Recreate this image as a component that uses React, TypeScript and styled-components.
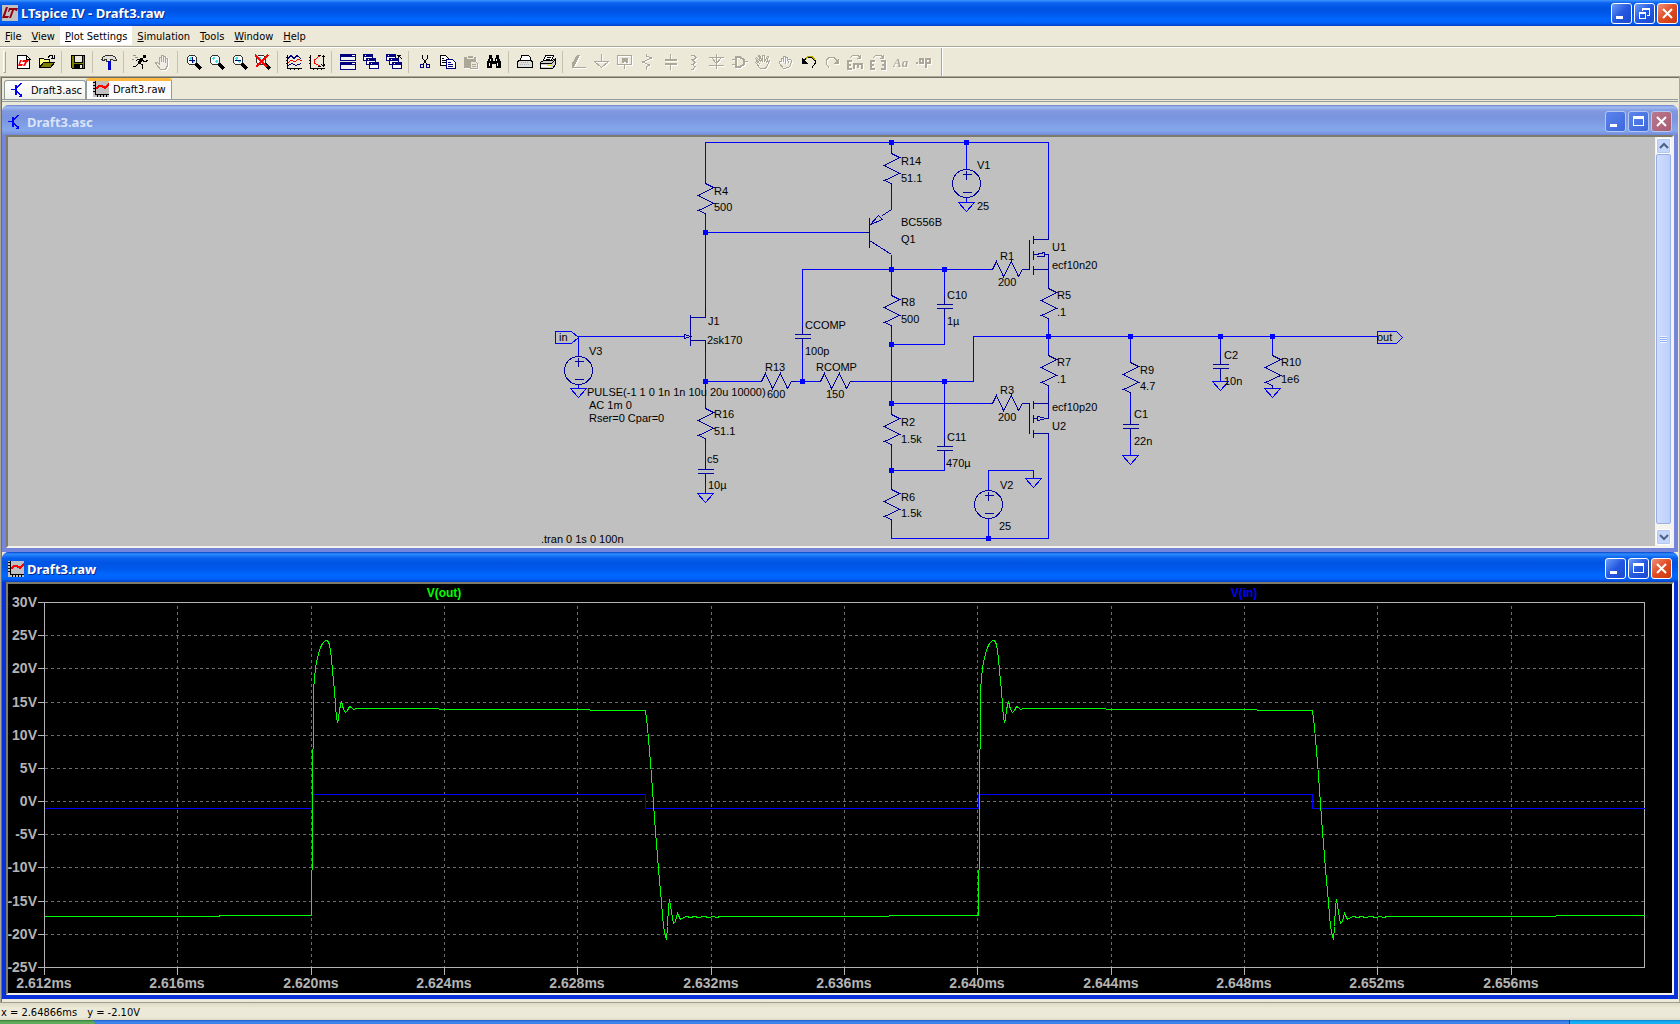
import React from 'react'
import styled, { createGlobalStyle, css } from 'styled-components'

const GlobalStyle = createGlobalStyle`
	* {
		box-sizing: border-box;
	}

	body {
		margin: 0;
		background: #ece9d8;
		font-family: 'DejaVu Sans Condensed', 'Liberation Sans', sans-serif;
		font-size: 11px;
		color: #000;
	}

	button {
		font: inherit;
		color: inherit;
		padding: 0;
		border: 0;
		background: none;
	}
`

const Page = styled.div`
	display: flex;
	flex-direction: column;
	min-height: 100vh;
`

const TitleBar = styled.header`
	display: flex;
	align-items: center;
	gap: 3px;
	height: 26px;
	padding: 0 2px;
	background: linear-gradient(
		#3d95ff 0,
		#0b62ef 3px,
		#0054e3 8px,
		#0055e5 12px,
		#0066ff 19px,
		#0060f8 23px,
		#0040cb 26px
	);
`

const TitleText = styled.h1<{ $faded?: boolean }>`
	flex: 1;
	margin: 0;
	font-family: 'Noto Sans', sans-serif;
	font-size: 13px;
	line-height: 20px;
	font-weight: 700;
	color: ${p => (p.$faded ? '#d8e4f8' : '#fff')};
	text-shadow: ${p => (p.$faded ? 'none' : '1px 1px 0 #0a2a8a')};
`

const Controls = styled.div`
	display: flex;
	gap: 2px;
`

const ControlButton = styled.button<{ $close?: boolean; $faded?: boolean }>`
	width: 21px;
	height: 21px;
	border: 1px solid ${p => (p.$faded ? '#b4c8f0' : '#fff')};
	border-radius: 3px;
	background: ${p =>
		p.$close
			? p.$faded
				? 'linear-gradient(135deg, #b8788c, #a85c74)'
				: 'linear-gradient(135deg, #f09078, #e04c24 50%, #c83810)'
			: p.$faded
				? 'linear-gradient(135deg, #5c84ec, #3c68dc)'
				: 'linear-gradient(135deg, #6c9cf8, #2458e0 50%, #1c48d0)'};

	svg {
		display: block;
	}
`

const MenuBar = styled.nav`
	display: flex;
	height: 22px;
	border-bottom: 1px solid #fff;
	box-shadow: inset 0 -1px 0 #aca899;
`

const MenuItem = styled.button<{ $active?: boolean }>`
	height: 19px;
	padding: 1px 5px 0;
	background: ${p => (p.$active ? '#fff' : 'transparent')};
`

const ToolBar = styled.div`
	display: flex;
	align-items: center;
	height: 28px;
	padding-left: 3px;
`

const Grip = styled.span`
	width: 3px;
	height: 22px;
	margin-right: 6px;
	border: 1px solid #fff;
	border-right-color: #aca899;
	border-bottom-color: #aca899;
`

const ToolGroup = styled.div`
	display: flex;

	& + & {
		margin-left: 3px;
		padding-left: 4px;
		border-left: 1px solid #c5c2b2;
	}
`

const ToolButton = styled.button`
	display: flex;
	align-items: center;
	justify-content: center;
	width: 23px;
	height: 22px;

	&:disabled {
		color: #aca899;
		filter: drop-shadow(1px 1px 0 #fff);
	}
`

const ToolEnd = styled.span`
	align-self: stretch;
	width: 2px;
	margin-left: 6px;
	border-left: 1px solid #aca899;
	border-right: 1px solid #fff;
`

const Workspace = styled.main`
	flex: 1;
	border: solid #aca899;
	border-width: 1px 1px 0 1px;
	padding: 1px 1px 2px 1px;
	box-shadow: inset 1px 1px 0 #716f64;
`

const Tabs = styled.div`
	display: flex;
	align-items: flex-end;
	height: 24px;
	padding-left: 2px;
	border-bottom: 3px double #919b9c;
	margin-bottom: 3px;
`

const Tab = styled.button<{ $active?: boolean }>`
	display: flex;
	align-items: center;
	border: 1px solid #919b9c;
	border-radius: 3px 3px 0 0;
	border-bottom: 0;
	height: 19px;
	width: 82px;
	padding-left: 6px;
	gap: 4px;
	background: linear-gradient(#fff, #f0f0ea);

	${p =>
		p.$active &&
		css`
			height: 21px;
			width: 86px;
			padding-bottom: 2px;
			border-top: 3px solid #ffb83c;
			background: #fcfcfe;
		`}
`

const Child = styled.section<{ $active?: boolean }>`
	border: solid ${p => (p.$active ? '#0831d9' : '#7585dc')};
	border-width: 0 4px 4px 4px;
	border-radius: 7px 7px 0 0;
	box-shadow: inset 0 -1px 0 #fff;
`

const ChildTitle = styled.header<{ $active?: boolean }>`
	display: flex;
	align-items: center;
	gap: 3px;
	height: 30px;
	margin: 0 -4px;
	padding: 3px 6px 0 6px;
	border-radius: 7px 7px 0 0;
	background: ${p =>
		p.$active
			? 'linear-gradient(#0844c8 0, #2f8cff 2px, #0860ee 6px, #0054e3 11px, #0058ea 16px, #0068ff 23px, #0062fa 27px, #0040c8 30px)'
			: 'linear-gradient(#6a80cc 0, #a0bcf0 2px, #8098e0 6px, #7a94de 12px, #7e9ce4 18px, #86a8ec 25px, #7c98e4 28px, #7088d8 30px)'};
`

const Sunken = styled.div`
	display: flex;
	border: 2px solid #f4f3ee;
	border-top-color: #7d7b6c;
	border-left-color: #7d7b6c;
`

const Drawing = styled.svg<{ $dark?: boolean }>`
	display: block;
	flex: 1;
	min-width: 0;
	height: auto;
	background: ${p => (p.$dark ? '#000' : '#c0c0c0')};
`

const SchematicText = styled.text`
	font-family: 'Liberation Sans', Arial, sans-serif;
	font-size: 11px;
	fill: #000;
`

const AxisText = styled.text`
	font-family: 'Liberation Sans', Arial, sans-serif;
	font-size: 14px;
	font-weight: 700;
	fill: #b4b4b4;
`

const TraceName = styled.text`
	font-family: 'Liberation Sans', Arial, sans-serif;
	font-size: 12px;
	font-weight: 700;
	text-anchor: middle;
`

const ScrollBar = styled.div`
	display: flex;
	flex-direction: column;
	width: 17px;
	padding: 1px;
	background: #f4f3ee;
`

const ScrollButton = styled.button`
	height: 16px;
	border: 1px solid #fff;
	border-radius: 2px;
	background: #c6d6fc;
	box-shadow: inset 0 0 0 1px #b4c8f6;

	svg {
		display: block;
	}
`

const Thumb = styled.div`
	display: flex;
	align-items: center;
	justify-content: center;
	flex: 1;
	margin-bottom: 5px;
	border: 1px solid #98b0e8;
	border-radius: 2px;
	background: linear-gradient(90deg, #d0dcfe, #bccffb);

	&::after {
		content: '';
		width: 7px;
		height: 7px;
		background: repeating-linear-gradient(#eef4fe 0 1px, #8cb0f8 1px 2px);
	}
`

const StatusBar = styled.footer`
	display: flex;
	align-items: center;
	gap: 10px;
	height: 18px;
	padding: 1px 0 0 1px;
	border-top: 1px solid #a09e90;
	background: linear-gradient(#dcd9c6, #ece9d8 5px, #ece9d8 14px, #dcd9c4);
`

const TaskBar = styled.div`
	display: flex;
	height: 4px;
	background: linear-gradient(#2058c8, #3c88f0 2px, #3c80e8);
`

const StartEdge = styled.span`
	width: 95px;
	border-radius: 0 6px 0 0;
	background: linear-gradient(#387838, #5cac5c 2px);
`

const TrayEdge = styled.span`
	width: 111px;
	margin-left: auto;
	border-left: 1px solid #104090;
	background: linear-gradient(#1080d0, #18b0f4 2px);
`

/* ---------- icons ---------- */

const Icon = ({ children }: { children: React.ReactNode }) => (
	<svg width='16' height='16' viewBox='0 0 16 16' fill='none' shapeRendering='crispEdges' aria-hidden='true'>
		{children}
	</svg>
)

const LtLogo = () => (
	<Icon>
		<path d='M0 0h16v16H0z' fill='#c0c0c0' />
		<g fill='#900010' shapeRendering='auto'>
			<path d='M4 2h2L3 11h4l-1 2H0z' />
			<path d='M7 3h9l-1 3h-2l1-1h-2l-3 8H7l3-8H8L7 7H6z' />
		</g>
	</Icon>
)

const PlotIcon = () => (
	<Icon>
		<path d='M0 0h16v16H0z' fill='#c0c0c0' />
		<path d='M2.5 0v13.5H16M0 1.5h2M0 4.5h2M0 7.5h2M0 10.5h2M4.5 14v2M7.5 14v2M10.5 14v2M13.5 14v2' stroke='#000' />
		<path d='M3 8l3-3h3l3 2 4-4' stroke='#f00' strokeWidth='2' />
	</Icon>
)

const AscIcon = () => (
	<Icon>
		<path d='M0 7.5h5M10.5 1L6 5.5M6 9.5l5 5' stroke='#00f' />
		<path d='M4 3h2v10H4zM11 15v-4l-4 4z' fill='#00f' />
	</Icon>
)

const Lens = ({ children }: { children?: React.ReactNode }) => (
	<>
		<circle cx='6' cy='6' r='5' fill='#f4fcfc' stroke='#303030' />
		<path d='M3.5 5.5l2-2M6.5 8.5l2-2' stroke='#40e0e8' strokeWidth='2' />
		<path d='M10 10l5 5' stroke='#000' strokeWidth='3' />
		{children}
	</>
)

const Windows = () => (
	<>
		<path d='M.5 .5h9v6h-9zM3.5 4.5h9v6h-9zM6.5 8.5h9v6h-9z' fill='#fff' stroke='#000080' />
		<path d='M0 0h10v3H0zM3 4h10v3H3zM6 8h10v3H6z' fill='#000080' />
		<path d='M2 1h1v1H2zM5 5h1v1H5zM8 9h1v1H8z' fill='#fff' />
	</>
)

const icons: Record<string, React.ReactNode> = {
	'New schematic': (
		<>
			<path d='M1.5 1.5h9l3 3v10h-12z' fill='#fff' stroke='#000' />
			<path d='M10.5 1v4h4' stroke='#000' />
			<g shapeRendering='auto' fill='#f00'>
				<path d='M4 6h2l-2 4h3l-1 2H2z' />
				<path d='M7 6h6l-1 2h-1l-2 4H7l2-4H6z' />
			</g>
		</>
	),
	Open: (
		<>
			<path d='M.5 13.5v-9h4l1 1h5v3' fill='#ffff80' stroke='#000' />
			<path d='M.5 13.5l4-5h11l-4 5z' fill='#808000' stroke='#000' />
			<path d='M9 3.5l2-2h2l1 2M12 4.5h3.5V1' stroke='#000' />
		</>
	),
	Save: (
		<>
			<path d='M1.5 1.5h13v13h-12l-1-1z' fill='#808000' stroke='#000' />
			<path d='M4 1h8v7H4z' fill='#ece9d8' stroke='#000' />
			<path d='M4 10h9v5H4z' fill='#000' />
			<path d='M10 11h2v3h-2z' fill='#ece9d8' />
		</>
	),
	'Control panel': (
		<>
			<path d='M.5 5.5l2-3 3-1h6l3 2 1 3h-3l-1-1h-2v2h-4v-2h-1l-2 1z' fill='#e0e0d8' stroke='#303030' />
			<path d='M7.5 7.5h2v8h-2z' fill='#00f' stroke='#0000c0' />
		</>
	),
	Run: (
		<>
			<path d='M11 1h3v3h-3z' fill='#000' />
			<path d='M10 4L7 9' stroke='#000' strokeWidth='3' />
			<path d='M7 9l4 2-1 4M7 9l-3 3H1M9 5H6L4 7M10 6l3 2 3-2' stroke='#000' />
			<path d='M1 1.5h3M3 3.5h3M0 5.5h2' stroke='#909090' />
		</>
	),
	Halt: (
		<path
			d='M5.5 15.5l-4-5-1-2h2l2 2v-7h2v4-6h2v6-5h2v6-4h2v7l-2 4z'
			fill='#f0eee4'
			stroke='currentColor'
		/>
	),
	'Zoom in': (
		<Lens>
			<path d='M3 6h6M6 3v6' stroke='#000080' />
		</Lens>
	),
	'Zoom area': <Lens />,
	'Zoom back': (
		<Lens>
			<path d='M3 6h6' stroke='#000080' />
		</Lens>
	),
	'Zoom fit': (
		<Lens>
			<path d='M0 1l12 12M13 1L1 13' stroke='#f00' strokeWidth='2' />
		</Lens>
	),
	'Autorange Y': (
		<>
			<path d='M1.5 1v13.5H16M0 3.5h1M0 6.5h1M0 9.5h1M4.5 15v1M8.5 15v1M12.5 15v1' stroke='#000' />
			<path d='M2 4.5l3-3 3 3 3-3 4 3' stroke='#000080' />
			<path d='M2 8.5l3-2 4 1 3-2 4 1' stroke='#f00' />
			<path d='M2 11.5l4-2 4 2 5-2' stroke='#000080' />
		</>
	),
	'Plot limits': (
		<>
			<path d='M1.5 1v13.5H16M0 3.5h1M0 6.5h1M0 9.5h1M4.5 15v1M8.5 15v1M12.5 15v1' stroke='#000' />
			<path d='M10.5 2l-5 4v3l5 3' stroke='#f00' />
			<path d='M14.5 1v12M12.5 3.5l2-2 1 2M12.5 10.5l2 2 1-2M9 1.5h3M9 12.5h3' stroke='#000' />
		</>
	),
	Tile: (
		<>
			<path d='M.5 .5h15v6H.5zM.5 8.5h15v7H.5z' fill='#f4f4f0' stroke='#000080' />
			<path d='M0 0h16v3H0zM0 8h16v3H0z' fill='#000080' />
			<path d='M12 1h3v1h-3zM12 9h3v1h-3z' fill='#fff' />
		</>
	),
	Cascade: <Windows />,
	'Close all': (
		<>
			<Windows />
			<path d='M11 1.5h4M12.5 1v3M12 1l4 4' stroke='#000' />
		</>
	),
	Cut: (
		<>
			<path d='M5.5 1v3l4 6M10.5 1v3l-4 6' stroke='#000' />
			<circle cx='5' cy='12' r='2' stroke='#000080' />
			<circle cx='11' cy='12' r='2' stroke='#000080' />
		</>
	),
	Copy: (
		<>
			<path d='M.5 1.5h5l3 3v7h-8z' fill='#fff' stroke='#000' />
			<path d='M2 4.5h2M2 6.5h4M2 8.5h4' stroke='#000' />
			<path d='M6.5 5.5h6l3 3v6h-9z' fill='#fff' stroke='#000080' />
			<path d='M8 8.5h3M8 10.5h5M8 12.5h5' stroke='#000080' />
		</>
	),
	Paste: (
		<>
			<path d='M1 3h12v11H1z' fill='currentColor' />
			<path d='M4 1h6v3H4z' fill='currentColor' stroke='#ece9d8' />
			<path d='M7.5 7.5h5l2 2v5h-7z' fill='#ece9d8' stroke='currentColor' />
			<path d='M9 10.5h4M9 12.5h4' stroke='currentColor' />
		</>
	),
	Find: (
		<>
			<path d='M3 1h3v3h1v3h2V4h1V1h3v3l2 4v6h-5v-4H6v4H1V8l2-4z' fill='#000' />
			<path d='M4.5 5v2M3.5 9v3M10.5 5v2M11.5 9v3' stroke='#fff' />
		</>
	),
	'Print setup': (
		<>
			<path d='M3.5 6.5l1-5h7l2 2v3' fill='#fff' stroke='#000' />
			<path d='M.5 7.5l2-1h11l2 1v6H.5z' fill='#dcdcd8' stroke='#000' />
			<path d='M4 8.5h8M3 10.5h10' stroke='#b0b0b0' strokeDasharray='1 1' />
		</>
	),
	Print: (
		<>
			<path d='M3.5 6.5l2-5h8l-2 5' fill='#fff' stroke='#000' />
			<path d='M7 3.5h4M6 5.5h4' stroke='#000' />
			<path d='M.5 8.5l3-2h9l3-2v6l-3 4H.5z' fill='#d0d0cc' stroke='#000' />
			<path d='M.5 9.5h11l3-3' stroke='#000' />
			<path d='M1 11h10v2H1z' fill='#fff' />
			<path d='M7 11h4v1H7z' fill='#f0e000' />
		</>
	),
	Wire: (
		<>
			<path d='M6 1h3L4 11l-3 3v-5z' fill='currentColor' />
			<path d='M1 13.5h14' stroke='currentColor' />
		</>
	),
	Ground: <path d='M7.5 0v7M.5 7.5h14l-7 6z' stroke='currentColor' />,
	'Label net': (
		<>
			<path d='M.5 1.5h14v9H.5zM7.5 11v4' stroke='currentColor' />
			<path d='M5.5 9V4.5h4V9M6 6.5h4' stroke='currentColor' strokeWidth='2' />
		</>
	),
	Resistor: <path d='M6.5 0v2l5 2-9 4 7 3-3 2v3' stroke='currentColor' />,
	Capacitor: (
		<>
			<path d='M7.5 0v6M7.5 10v6' stroke='currentColor' />
			<path d='M2 6h12M2 10h12' stroke='currentColor' strokeWidth='2' />
		</>
	),
	Inductor: <path d='M5 1.5h3l2 2-2 2H6l3 3-2 2H6l3 2-2 3H5' stroke='currentColor' />,
	Diode: <path d='M7.5 0v15M0 3.5h15M2.5 3.5l5 6 5-6M0 11.5h15' stroke='currentColor' />,
	Component: (
		<>
			<path d='M4 3h4l4 3v4l-4 3H4z' stroke='currentColor' strokeWidth='2' />
			<path d='M0 5.5h4M0 10.5h4M13 7.5h3' stroke='currentColor' />
		</>
	),
	Move: (
		<path
			d='M5.5 14.5l-5-6 1-1 3 2-4-5 1-1 4 4-2-6h1l3 6v-6h2v6l3-5h1l-2 6 3-2v1l-4 7z'
			stroke='currentColor'
		/>
	),
	Drag: (
		<path
			d='M5.5 14.5l-4-5v-2h2v-3h2v3-5h2v4-3h2v3-1h3l1 1-1 5-2 2zM7.5 7v3M10.5 7v2'
			stroke='currentColor'
		/>
	),
	Undo: (
		<>
			<path d='M3 6.5l3-3h5l3 3v3l-3 4' stroke='#000' />
			<path d='M5 4.5l2-2h4l3 3' stroke='#b0a800' />
			<path d='M1 4v6h6z' fill='#000' />
		</>
	),
	Redo: (
		<>
			<path d='M13 6.5l-3-3H5l-3 3v3l3 4' stroke='currentColor' />
			<path d='M15 4v6H9z' fill='currentColor' />
		</>
	),
	Rotate: (
		<>
			<path d='M5 7H1v8h4M1 11h3M7 15v-5h8v5M11 10v4' stroke='currentColor' strokeWidth='2' />
			<path d='M3 3.5l3-2h5l2 2M13.5 1v3.5H10' stroke='currentColor' />
		</>
	),
	Mirror: (
		<>
			<path d='M5 7H1v8h4M1 11h3M11 7h4v8h-4M15 11h-3' stroke='currentColor' strokeWidth='2' />
			<path d='M3 3.5l3-2h5l2 2M13.5 1v3.5H10' stroke='currentColor' />
		</>
	),
	Text: (
		<text x='0' y='13' fontFamily='Liberation Serif, serif' fontStyle='italic' fontWeight='700' fontSize='13' fill='currentColor'>
			Aa
		</text>
	),
	'SPICE directive': (
		<path d='M0 9h2M4 5h3v4H4zM10 14V5h4v4h-4' stroke='currentColor' strokeWidth='2' />
	),
}

const toolGroups = [
	['New schematic', 'Open'],
	['Save'],
	['Control panel'],
	['Run', 'Halt'],
	['Zoom in', 'Zoom area', 'Zoom back', 'Zoom fit'],
	['Autorange Y', 'Plot limits'],
	['Tile', 'Cascade', 'Close all'],
	['Cut', 'Copy', 'Paste', 'Find'],
	['Print setup', 'Print'],
	[
		'Wire', 'Ground', 'Label net', 'Resistor', 'Capacitor', 'Inductor', 'Diode', 'Component',
		'Move', 'Drag', 'Undo', 'Redo', 'Rotate', 'Mirror', 'Text', 'SPICE directive',
	],
]

const disabledTools = [
	'Halt', 'Paste', 'Wire', 'Ground', 'Label net', 'Resistor', 'Capacitor', 'Inductor', 'Diode',
	'Component', 'Move', 'Drag', 'Redo', 'Rotate', 'Mirror', 'Text', 'SPICE directive',
]

const menus = ['File', 'View', 'Plot Settings', 'Simulation', 'Tools', 'Window', 'Help']

const WindowControls = ({ faded, restore }: { faded?: boolean; restore?: boolean }) => (
	<Controls>
		<ControlButton $faded={faded} aria-label='Minimize'>
			<svg width='19' height='19'>
				<path d='M4 12h7v3H4z' fill='#fff' />
			</svg>
		</ControlButton>
		<ControlButton $faded={faded} aria-label={restore ? 'Restore' : 'Maximize'}>
			<svg width='19' height='19' fill='none' stroke='#fff' shapeRendering='crispEdges'>
				{restore ? (
					<path d='M7.5 7V4.5h7v7H12M4.5 8.5h6v6h-6zM7 5.5h8M4 9.5h7' />
				) : (
					<path d='M4.5 4.5h10v9h-10zM4 5.5h10M4 6.5h10' />
				)}
			</svg>
		</ControlButton>
		<ControlButton $close $faded={faded} aria-label='Close'>
			<svg width='19' height='19' stroke='#fff' strokeWidth='2'>
				<path d='M5 5l9 9M14 5l-9 9' />
			</svg>
		</ControlButton>
	</Controls>
)

/* ---------- schematic ---------- */

const wires = [
	'M705 183V142H1048V239',
	'M891 142V153',
	'M966 142V168',
	'M705 213V317',
	'M705 232H864',
	'M891 183V209',
	'M891 254V295',
	'M802 331V269H992',
	'M944 269V301M944 311V344H891',
	'M891 325V414',
	'M578 355V336H684',
	'M705 340V408',
	'M705 381H761M791 381H820M850 381H973V336H1377',
	'M802 342V381',
	'M705 438V467M705 476V493',
	'M891 403H992',
	'M944 381V443M944 454V470H891',
	'M891 444V489M891 519V538H1048V433',
	'M988 489V470H1033V478M988 518V538',
	'M1048 269V288M1048 318V355M1048 385V403',
	'M1130 336V362M1130 392V421M1130 432V455',
	'M1220 336V361M1220 372V381',
	'M1272 336V355M1272 385V388',
	'M578 384V388M966 197V202',
	'M555 331H571L578 337L571 343H555Z',
	'M1377 331H1396L1402 337L1396 343H1377Z',
]

const nodes = [
	[891, 142], [966, 142], [705, 232], [891, 269], [944, 269], [891, 344], [1048, 336], [1130, 336],
	[1220, 336], [1272, 336], [705, 381], [802, 381], [944, 381], [891, 403], [891, 470], [988, 538],
]

const grounds = [
	[578, 388], [966, 202], [705, 493], [1033, 478], [1130, 455], [1220, 381], [1272, 388],
]

const resistors = [
	[705, 183], [891, 153], [891, 295], [891, 414], [891, 489], [705, 408],
	[1048, 288], [1048, 355], [1130, 362], [1272, 355],
]

const flatResistors = [[761, 381], [820, 381], [992, 269], [992, 403]]

const capacitors = [[802, 334], [944, 304], [944, 446], [705, 469], [1130, 424], [1220, 364]]

const sources = [[578, 370], [966, 183], [988, 504]]

const labels: [number, number, string][] = [
	[714, 195, 'R4'], [714, 211, '500'],
	[901, 165, 'R14'], [901, 182, '51.1'],
	[901, 226, 'BC556B'], [901, 243, 'Q1'],
	[977, 169, 'V1'], [977, 210, '25'],
	[1052, 251, 'U1'], [1052, 269, 'ecf10n20'],
	[1000, 260, 'R1'], [998, 286, '200'],
	[1057, 299, 'R5'], [1057, 316, '.1'],
	[947, 299, 'C10'], [947, 325, '1µ'],
	[901, 306, 'R8'], [901, 323, '500'],
	[708, 325, 'J1'], [707, 344, '2sk170'],
	[589, 355, 'V3'],
	[587, 396, 'PULSE(-1 1 0 1n 1n 10u 20u 10000)'],
	[589, 409, 'AC 1m 0'], [589, 422, 'Rser=0 Cpar=0'],
	[805, 329, 'CCOMP'], [805, 355, '100p'],
	[765, 371, 'R13'], [767, 398, '600'],
	[816, 371, 'RCOMP'], [826, 398, '150'],
	[714, 418, 'R16'], [714, 435, '51.1'],
	[707, 463, 'c5'], [708, 489, '10µ'],
	[901, 426, 'R2'], [901, 443, '1.5k'],
	[947, 441, 'C11'], [946, 467, '470µ'],
	[901, 501, 'R6'], [901, 517, '1.5k'],
	[1057, 366, 'R7'], [1057, 383, '.1'],
	[1000, 394, 'R3'], [998, 421, '200'],
	[1052, 411, 'ecf10p20'], [1052, 430, 'U2'],
	[1000, 489, 'V2'], [999, 530, '25'],
	[1140, 374, 'R9'], [1140, 390, '4.7'],
	[1134, 418, 'C1'], [1134, 445, '22n'],
	[1224, 359, 'C2'], [1224, 385, '10n'],
	[1281, 366, 'R10'], [1281, 383, '1e6'],
	[559, 341, 'in'], [1377, 341, 'out'],
	[541, 543, '.tran 0 1s 0 100n'],
]

const Schematic = () => (
	<Drawing viewBox='8 137 1647 409' role='img' aria-label='Amplifier schematic'>
		<g fill='none' transform='translate(0.5 0.5)' shapeRendering='crispEdges'>
			<g stroke='#0000ff'>
				{wires.map(d => (
					<path key={d} d={d} />
				))}
				{grounds.map(([x, y]) => (
					<path key={`${x}-${y}`} d={`M${x - 8} ${y}h16l-8 9z`} />
				))}
			</g>
			<g stroke='#0000a0'>
				{resistors.map(([x, y]) => (
					<path key={`${x}-${y}`} d={`M${x} ${y - 3}v3l8 4l-15 8l15 8l-15 7l7 3v3`} />
				))}
				{flatResistors.map(([x, y]) => (
					<path key={`${x}-${y}`} d={`M${x - 3} ${y}h3l4 -8l7 15l8 -15l7 15l4 -7h3`} />
				))}
				{capacitors.map(([x, y]) => (
					<path key={`${x}-${y}`} d={`M${x - 8} ${y}h16M${x - 8} ${y + 4}h16M${x} ${y}v-9M${x} ${y + 4}v9`} />
				))}
				{sources.map(([x, y]) => (
					<g key={x}>
						<circle cx={x} cy={y} r='14' />
						<path d={`M${x - 4} ${y - 9}h9M${x} ${y - 13}v9M${x - 4} ${y + 9}h9`} />
					</g>
				))}
				{/* Q1, J1 */}
				<path d='M862 232H869M869 217V247M891 209L882 215M869 240L891 254M870 224L878 215L882 219Z' />
				<path d='M690 314V345M705 307V317H690M690 340H705V350M684 334V338L690 336Z' />
				{/* U1, U2 */}
				<path d='M1022 269H1029V239M1033 235V243M1033 250V259M1033 265V274M1048 233V239H1033M1033 269H1048M1033 254H1036L1044 252V256H1036M1044 254H1048V284' />
				<path d='M1022 403H1029V433M1033 400V408M1033 414V422M1033 429V437M1048 439V433H1033M1033 403H1048M1033 418H1037V416L1046 418L1037 420V418M1046 418H1048V392' />
			</g>
		</g>
		{nodes.map(([x, y]) => (
			<rect key={`${x}-${y}`} x={x - 2} y={y - 2} width='5' height='5' fill='#0000ff' />
		))}
		{labels.map(([x, y, text]) => (
			<SchematicText key={`${x}-${y}`} x={x} y={y}>
				{text}
			</SchematicText>
		))}
	</Drawing>
)

/* ---------- waveform ---------- */

const PERIOD = 667
const voltages = [30, 25, 20, 15, 10, 5, 0, -5, -10, -15, -20, -25]
const times = [
	'2.612ms', '2.616ms', '2.620ms', '2.624ms', '2.628ms', '2.632ms',
	'2.636ms', '2.640ms', '2.644ms', '2.648ms', '2.652ms', '2.656ms',
]

const gridX = (i: number) => 44 + Math.round((i * 1600) / 12)
const gridY = (i: number) => 602 + Math.round((i * 365) / 11)

// one full cycle of V(out), starting at the rising edge
const cycle = [
	[311, 915], [311, 880], [312, 860], [312, 758], [313, 740], [313, 690], [314, 677], [315, 668],
	[316, 662], [318, 653], [320, 647], [322, 643], [325, 640], [327, 640], [329, 644], [330, 650],
	[331, 659], [332, 670], [334, 690], [335, 705], [336, 717], [337, 722], [338, 718], [339, 709],
	[341, 701], [343, 709], [345, 712], [347, 710], [349, 706], [351, 707], [353, 709], [356, 708],
	[438, 708], [439, 709], [589, 709], [590, 710], [645, 710], [647, 727], [650, 762], [653, 803],
	[655, 831], [657, 856], [659, 880], [661, 902], [662, 915], [663, 925], [664, 932], [666, 939],
	[667, 926], [668, 906], [669, 899], [670, 905], [672, 918], [673, 923], [675, 921], [677, 913],
	[679, 917], [680, 919], [683, 917], [686, 916], [690, 917], [694, 916], [698, 917], [704, 916],
	[708, 917], [713, 916], [716, 917], [720, 916], [888, 916], [889, 915],
]

const shift = (dx: number) => cycle.map(([x, y]) => `${x + dx} ${y}`).join('L')

const outPath = `M44 916H219V915H311L${shift(0)}H978L${shift(PERIOD)}H1644`
const inPath = 'M44 808H311V794H645V808H978V794H1312V808H1644'

const Waveform = () => (
	<Drawing $dark viewBox='8 584 1664 409' role='img' aria-label='V(out) and V(in) over time'>
		<g fill='none' transform='translate(0.5 0.5)' shapeRendering='crispEdges'>
			<g stroke='#6c6c6c' strokeDasharray='3 3'>
				{voltages.slice(1, -1).map((v, i) => (
					<path key={v} d={`M44 ${gridY(i + 1)}H1644`} />
				))}
				{times.slice(1).map((t, i) => (
					<path key={t} d={`M${gridX(i + 1)} 605V967`} />
				))}
			</g>
			<g stroke='#b4b4b4'>
				<path d='M44 602H1644V967H44Z' />
				{voltages.map((v, i) => (
					<path key={v} d={`M37 ${gridY(i)}H44`} />
				))}
				{times.map((t, i) => (
					<path key={t} d={`M${gridX(i)} 967V974`} />
				))}
			</g>
			<path d={inPath} stroke='#0000ff' />
			<path d={outPath} stroke='#00ff00' />
		</g>
		{voltages.map((v, i) => (
			<AxisText key={v} x='37' y={gridY(i) + 5} textAnchor='end'>
				{v}V
			</AxisText>
		))}
		{times.map((t, i) => (
			<AxisText key={t} x={gridX(i)} y='988' textAnchor='middle'>
				{t}
			</AxisText>
		))}
		<TraceName x='444' y='597' fill='#00ff00'>
			V(out)
		</TraceName>
		<TraceName x='1244' y='597' fill='#0000ff'>
			V(in)
		</TraceName>
	</Drawing>
)

export const App = () => (
	<Page>
		<GlobalStyle />
		<TitleBar>
			<LtLogo />
			<TitleText>LTspice IV - Draft3.raw</TitleText>
			<WindowControls restore />
		</TitleBar>
		<MenuBar>
			{menus.map(name => (
				<MenuItem key={name} $active={name === 'Plot Settings'}>
					<u>{name[0]}</u>
					{name.slice(1)}
				</MenuItem>
			))}
		</MenuBar>
		<ToolBar>
			<Grip />
			{toolGroups.map(group => (
				<ToolGroup key={group[0]}>
					{group.map(name => (
						<ToolButton key={name} aria-label={name} disabled={disabledTools.includes(name)}>
							<Icon>{icons[name]}</Icon>
						</ToolButton>
					))}
				</ToolGroup>
			))}
			<ToolEnd />
		</ToolBar>
		<Workspace>
			<Tabs>
				<Tab>
					<AscIcon />
					Draft3.asc
				</Tab>
				<Tab $active>
					<PlotIcon />
					Draft3.raw
				</Tab>
			</Tabs>
			<Child>
				<ChildTitle>
					<AscIcon />
					<TitleText as='h2' $faded>
						Draft3.asc
					</TitleText>
					<WindowControls faded />
				</ChildTitle>
				<Sunken>
					<Schematic />
					<ScrollBar>
						<ScrollButton aria-label='Scroll up'>
							<svg width='13' height='14' fill='none' stroke='#4d6185' strokeWidth='2'>
								<path d='M3 9l4-4 4 4' />
							</svg>
						</ScrollButton>
						<Thumb />
						<ScrollButton aria-label='Scroll down'>
							<svg width='13' height='14' fill='none' stroke='#4d6185' strokeWidth='2'>
								<path d='M3 5l4 4 4-4' />
							</svg>
						</ScrollButton>
					</ScrollBar>
				</Sunken>
			</Child>
			<Child $active>
				<ChildTitle $active>
					<PlotIcon />
					<TitleText as='h2'>Draft3.raw</TitleText>
					<WindowControls />
				</ChildTitle>
				<Sunken>
					<Waveform />
				</Sunken>
			</Child>
		</Workspace>
		<StatusBar>
			<span>x = 2.64866ms</span>
			<span>y = -2.10V</span>
		</StatusBar>
		<TaskBar>
			<StartEdge />
			<TrayEdge />
		</TaskBar>
	</Page>
)

export default App
